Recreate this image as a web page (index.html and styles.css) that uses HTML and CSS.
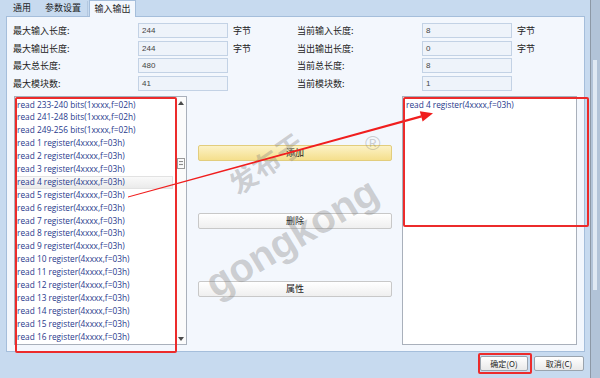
FILE: index.html
```html
<!DOCTYPE html>
<html>
<head>
<meta charset="utf-8">
<link rel="stylesheet" href="styles.css">
</head>
<body>
<div class="screen">
  <div class="main">
    <div class="tabs">
      <div class="tab t1">通用</div>
      <div class="tab t2">参数设置</div>
      <div class="tab active">输入输出</div>
    </div>
    <div class="panel">
      <div class="fields">
        <div class="lbl">最大输入长度:</div><div class="inp">244</div><div class="unit">字节</div>
        <div class="lbl">当前输入长度:</div><div class="inp">8</div><div class="unit">字节</div>
        <div class="lbl">最大输出长度:</div><div class="inp">244</div><div class="unit">字节</div>
        <div class="lbl">当出输出长度:</div><div class="inp">0</div><div class="unit">字节</div>
        <div class="lbl">最大总长度:</div><div class="inp">480</div><div class="unit"></div>
        <div class="lbl">当前总长度:</div><div class="inp">8</div><div class="unit"></div>
        <div class="lbl">最大模块数:</div><div class="inp">41</div><div class="unit"></div>
        <div class="lbl">当前模块数:</div><div class="inp">1</div><div class="unit"></div>
      </div>
      <div class="work">
        <div class="listbox left">
          <ul class="items">
            <li>read 233-240 bits(1xxxx,f=02h)</li>
            <li>read 241-248 bits(1xxxx,f=02h)</li>
            <li>read 249-256 bits(1xxxx,f=02h)</li>
            <li>read 1 register(4xxxx,f=03h)</li>
            <li>read 2 register(4xxxx,f=03h)</li>
            <li>read 3 register(4xxxx,f=03h)</li>
            <li class="sel">read 4 register(4xxxx,f=03h)</li>
            <li>read 5 register(4xxxx,f=03h)</li>
            <li>read 6 register(4xxxx,f=03h)</li>
            <li>read 7 register(4xxxx,f=03h)</li>
            <li>read 8 register(4xxxx,f=03h)</li>
            <li>read 9 register(4xxxx,f=03h)</li>
            <li>read 10 register(4xxxx,f=03h)</li>
            <li>read 11 register(4xxxx,f=03h)</li>
            <li>read 12 register(4xxxx,f=03h)</li>
            <li>read 13 register(4xxxx,f=03h)</li>
            <li>read 14 register(4xxxx,f=03h)</li>
            <li>read 15 register(4xxxx,f=03h)</li>
            <li>read 16 register(4xxxx,f=03h)</li>
          </ul>
          <div class="vscroll">
            <div class="arrow up"></div>
            <div class="track"><div class="thumb"></div></div>
            <div class="arrow down"></div>
          </div>
        </div>
        <div class="actions">
          <div class="btn add">添加</div>
          <div class="btn">删除</div>
          <div class="btn">属性</div>
        </div>
        <div class="listbox right">
          <ul class="items">
            <li>read 4 register(4xxxx,f=03h)</li>
          </ul>
        </div>
      </div>
    </div>
    <div class="footer">
      <div class="fbtn ok">确定(O)</div>
      <div class="fbtn cancel">取消(C)</div>
    </div>
  </div>
  <div class="edge"><div class="edge-bar"></div></div>

  <div class="wm wm-cn">发布于</div>
  <div class="wm wm-en">gongkong</div>
  <div class="wm wm-r">®</div>

  <svg class="arrow-svg" width="600" height="378" viewBox="0 0 600 378">
    <polygon points="128,196.6 128,197.4 421.8,117.6 421.2,115.2" fill="#f01e1e"/>
    <polygon points="433,113.3 422.6,121.4 419.8,111.2" fill="#f01e1e"/>
  </svg>
  <div class="mark mark-left"></div>
  <div class="mark mark-right"></div>
  <div class="mark mark-ok"></div>
</div>
</body>
</html>
```
FILE: styles.css
```css
* { box-sizing: border-box; }
html, body { margin: 0; padding: 0; }
body {
  width: 600px;
  height: 378px;
  overflow: hidden;
  font-family: "Noto Sans CJK SC", "Noto Sans", sans-serif;
  font-size: 9px;
  color: #1c1c1c;
}
.screen {
  position: relative;
  width: 600px;
  height: 378px;
  display: flex;
  background: #c7daef;
}
.main {
  width: 590px;
  display: flex;
  flex-direction: column;
}
.tabs {
  height: 16px;
  display: flex;
  padding-left: 5px;
  align-items: flex-end;
}
.tab {
  height: 15px;
  line-height: 14px;
  text-align: center;
  font-size: 9px;
  color: #1e1e1e;
}
.t1 { width: 34px; }
.t2 { width: 49px; border-right: 1px solid #b4c8e0; margin-right: 1px; }
.tab.active {
  width: 47px;
  height: 17px;
  line-height: 16px;
  margin-bottom: -1px;
  background: #f3f7fd;
  border: 1px solid #a5bedb;
  border-bottom: none;
  position: relative;
  z-index: 1;
}
.panel {
  margin: 0 5px 0 6px;
  height: 336px;
  background: #f3f7fd;
  border: 1px solid #a5bedb;
  display: flex;
  flex-direction: column;
}
.fields {
  padding: 6px 0 0 6px;
  display: grid;
  grid-template-columns: 125px 90px 69px 125px 90px auto;
  grid-auto-rows: 15px;
  row-gap: 2.5px;
  align-items: center;
}
.lbl { font-size: 9px; line-height: 15px; color: #222; }
.unit { font-size: 9px; line-height: 15px; padding-left: 5px; color: #222; }
.inp {
  height: 15px;
  background: #eef3fa;
  border: 1px solid #c3d2e5;
  font-family: "Liberation Sans", sans-serif;
  font-size: 8px;
  line-height: 13px;
  padding-left: 3px;
  color: #444;
}
.work {
  margin-top: 5.5px;
  padding-left: 7px;
  display: flex;
  height: 249px;
}
.listbox {
  background: #fff;
  border: 1px solid #a9b0bb;
  height: 249px;
  display: flex;
}
.listbox.left { width: 173px; }
.listbox.right { width: 175px; margin-left: 10px; }
.items {
  list-style: none;
  margin: 0;
  padding: 1.5px 0 0 0;
  flex: 1;
  font-family: "Open Sans", sans-serif;
  font-size: 8.3px;
  line-height: 12.9px;
  color: #28398c;
}
.items li { padding-left: 2px; white-space: nowrap; height: 12.9px; }
.right .items li { padding-left: 3px; }
.items li.sel {
  background: linear-gradient(#fbfbfb, #e9e9e9);
  box-shadow: inset 0 0 0 1px #e2e2e2;
  margin-right: 2px;
}
.vscroll {
  width: 11px;
  border-left: 1px solid #ececec;
  display: flex;
  flex-direction: column;
  background: #fbfbfb;
}
.arrow { height: 12px; position: relative; }
.arrow.up::after, .arrow.down::after {
  content: "";
  position: absolute;
  left: 2px;
  width: 0; height: 0;
  border-left: 3px solid transparent;
  border-right: 3px solid transparent;
}
.arrow.up::after { top: 4px; border-bottom: 4px solid #4a4a4a; }
.arrow.down::after { top: 5px; border-top: 4px solid #4a4a4a; }
.track { flex: 1; padding-top: 49px; }
.thumb {
  margin-left: 1px;
  width: 8px;
  height: 11px;
  border: 1px solid #9a9a9a;
  background: repeating-linear-gradient(#f2f2f2 0 2px, #8c8c8c 2px 3px);
  background-clip: content-box;
  padding: 2px 1px;
}
.actions {
  width: 194px;
  margin-left: 11px;
  padding-top: 49px;
  display: flex;
  flex-direction: column;
  gap: 52px;
}
.btn {
  height: 16px;
  border: 1px solid #c8c8c8;
  border-radius: 2px;
  background: linear-gradient(#ffffff, #efefef);
  text-align: center;
  font-size: 9px;
  line-height: 14px;
  color: #1c1c1c;
}
.btn.add {
  background: linear-gradient(#fcf2c6, #f5df8c);
  border-color: #e2cd7d;
}
.footer {
  padding: 4px 6px 0 0;
  display: flex;
  justify-content: flex-end;
  gap: 6px;
}
.fbtn {
  height: 15px;
  border: 1px solid #9aa3ad;
  border-radius: 2px;
  background: linear-gradient(#ffffff, #e9e9e9);
  font-size: 8px;
  line-height: 13px;
  text-align: center;
  color: #1c1c1c;
}
.fbtn.ok { width: 48px; }
.fbtn.cancel { width: 50px; }
.edge {
  width: 10px;
  border-left: 1px solid #8d98a6;
  background: #b2c3d8;
  position: relative;
}
.edge-bar {
  margin: 60px 0 0 2px;
  width: 4px;
  height: 230px;
  background: #dfe8f3;
}
.wm {
  position: absolute;
  color: rgba(130, 130, 130, 0.36);
  font-weight: bold;
  white-space: nowrap;
  pointer-events: none;
}
.wm-cn {
  left: 224px;
  top: 143px;
  font-size: 27px;
  font-family: "Noto Sans CJK SC", sans-serif;
  transform: rotate(-35deg);
  letter-spacing: 1px;
}
.wm-en {
  left: 195px;
  top: 215px;
  font-size: 40px;
  font-family: "Liberation Sans", sans-serif;
  transform: rotate(-31deg);
}
.wm-r {
  left: 365px;
  top: 131px;
  font-size: 21px;
  font-weight: normal;
  font-family: "Liberation Sans", sans-serif;
}
.arrow-svg { position: absolute; left: 0; top: 0; pointer-events: none; }
.mark {
  position: absolute;
  border: 2px solid #ec2b2b;
  border-radius: 2px;
}
.mark-left { left: 15px; top: 97px; width: 162px; height: 256px; }
.mark-right { left: 403px; top: 97px; width: 186px; height: 130px; }
.mark-ok { left: 478px; top: 353px; width: 54px; height: 21px; }
```
